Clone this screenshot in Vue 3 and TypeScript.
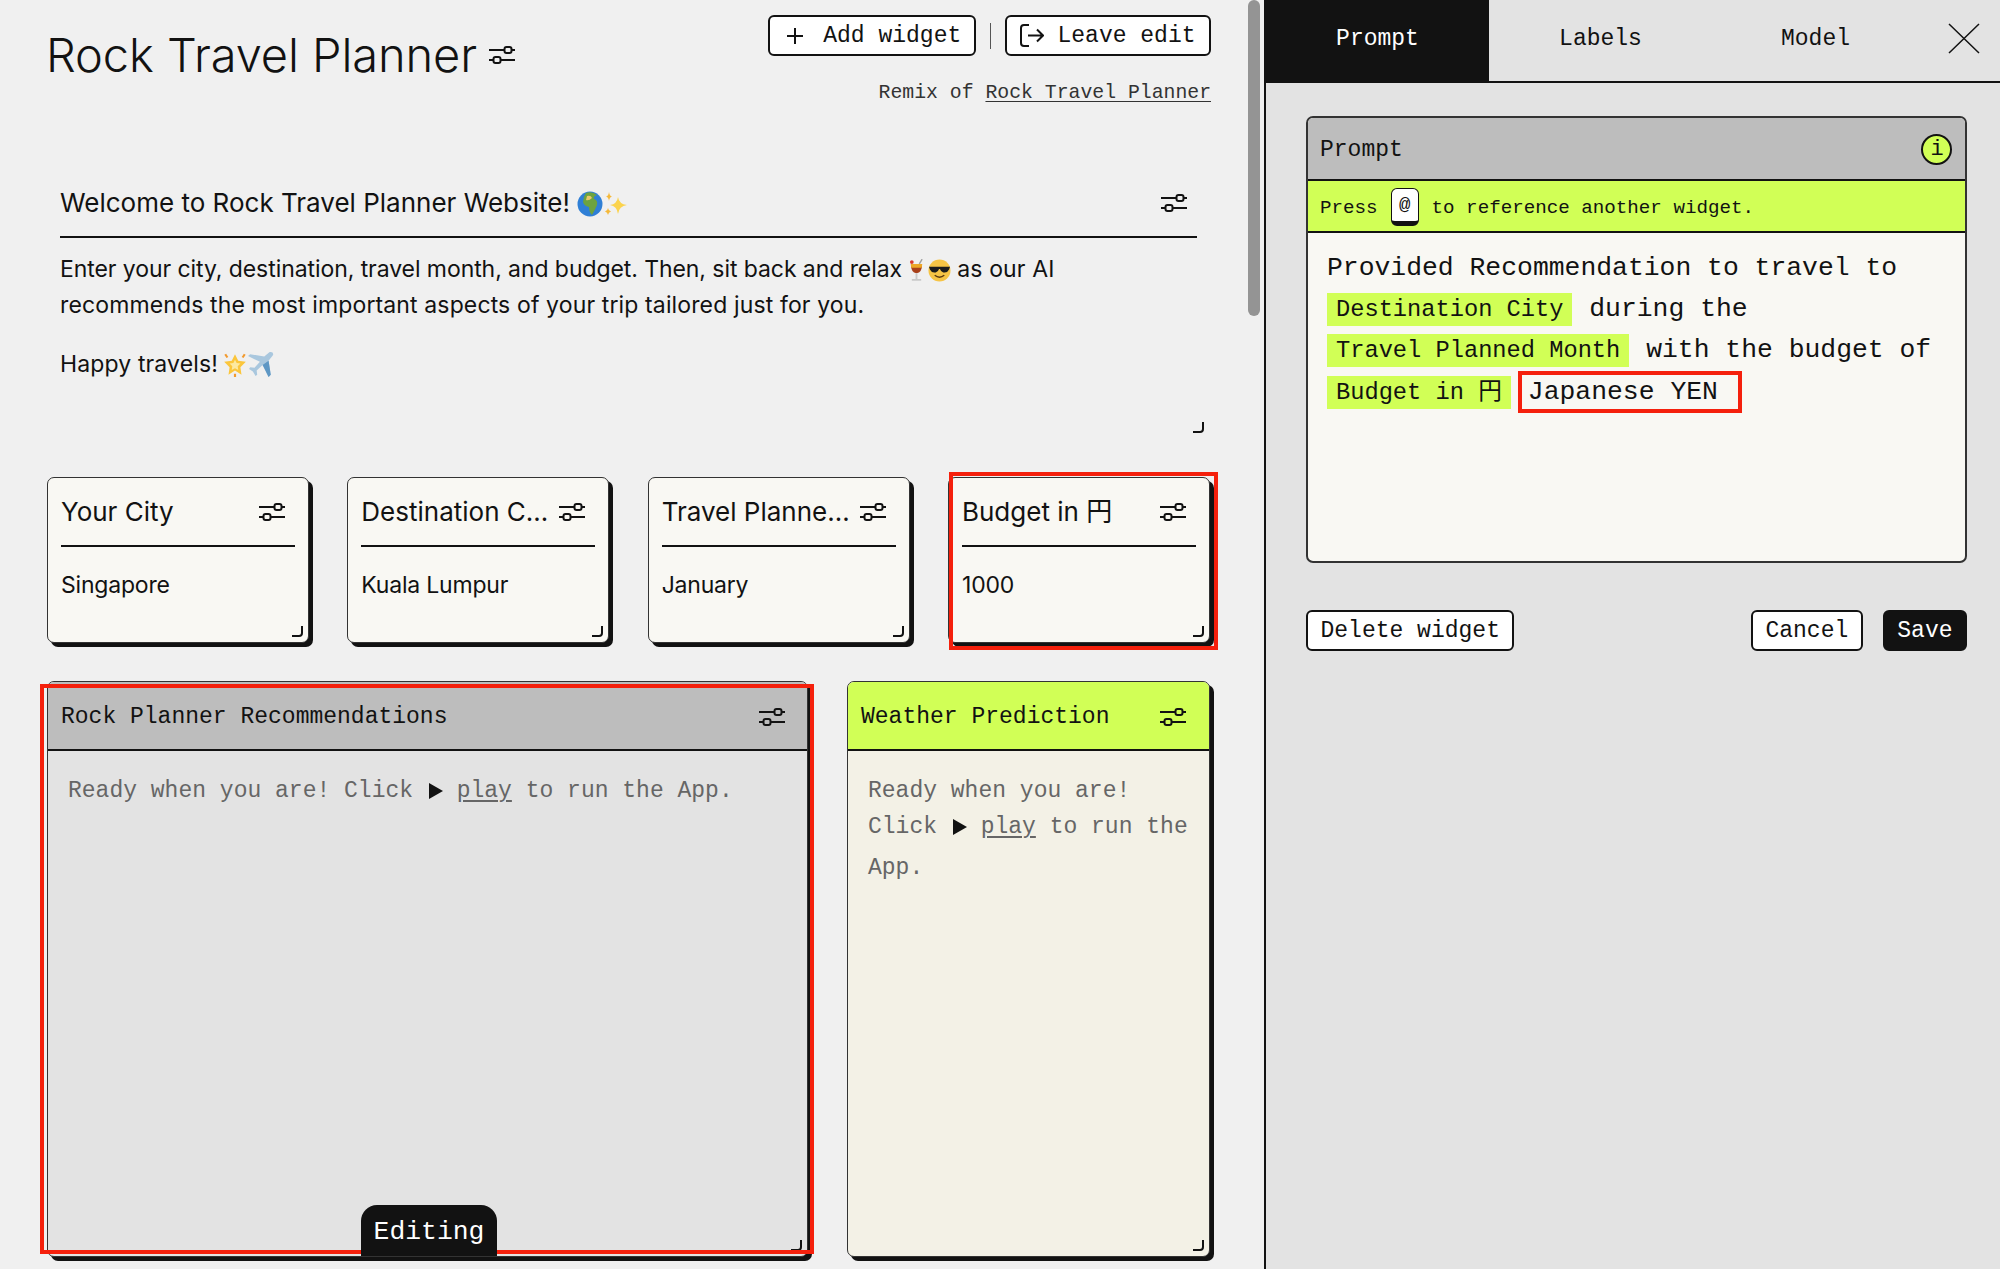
<script setup lang="ts">
import { ref } from 'vue'

interface Field {
  title: string
  value: string
  marked?: boolean
}

const fields = ref<Field[]>([
  { title: 'Your City', value: 'Singapore' },
  { title: 'Destination City', value: 'Kuala Lumpur' },
  { title: 'Travel Planned Month', value: 'January' },
  { title: 'Budget in 円', value: '1000', marked: true }
])

const tabs = ['Prompt', 'Labels', 'Model']
const activeTab = ref('Prompt')
</script>

<template>
  <svg class="defs" width="0" height="0" aria-hidden="true">
    <symbol id="sliders" viewBox="0 0 26 18">
      <path d="M0 4H15M23 4H26M0 14H4M12 14H26" fill="none" stroke="currentColor" stroke-width="2" />
      <rect x="15.500" y="1" width="7" height="6" rx="2" fill="none" stroke="currentColor" stroke-width="2" />
      <rect x="4.500" y="11" width="7" height="6" rx="2" fill="none" stroke="currentColor" stroke-width="2" />
    </symbol>
    <symbol id="corner" viewBox="0 0 12 12">
      <path d="M1 11H8Q11 11 11 8V1" fill="none" stroke="currentColor" stroke-width="2" />
    </symbol>
    <symbol id="play" viewBox="0 0 14 16">
      <path d="M0 0L14 8L0 16Z" fill="currentColor" />
    </symbol>
  </svg>

  <div class="app">
    <main class="board">
      <div class="scroll-thumb"></div>

      <header class="top">
        <div class="app-title">
          <h1>Rock Travel Planner</h1>
          <svg class="sliders"><use href="#sliders" /></svg>
        </div>
        <div class="top-right">
          <div class="actions">
            <button class="btn add">
              <svg width="18" height="18" viewBox="0 0 18 18"><path d="M9 1V17M1 9H17" fill="none" stroke="currentColor" stroke-width="2" /></svg>
              Add widget
            </button>
            <span class="divider"></span>
            <button class="btn leave">
              <svg width="24" height="23" viewBox="0 0 24 23" fill="none" stroke="currentColor" stroke-width="2">
                <path d="M9 1H4Q1 1 1 4V19Q1 22 4 22H9" />
                <path d="M8 11.500H23M17 5.500L23 11.500L17 17.500" />
              </svg>
              Leave edit
            </button>
          </div>
          <p class="remix">Remix of <a>Rock Travel Planner</a></p>
        </div>
      </header>

      <section class="welcome">
        <div class="welcome-head">
          <h2>
            Welcome to Rock Travel Planner Website!
            <svg class="emoji globe" viewBox="0 0 26 26" role="img" aria-label="globe">
              <circle cx="13" cy="13" r="12.500" fill="#2f7fd6" />
              <path d="M9 2Q15 0 20 4Q16 5 17 8Q21 9 20 14Q18 19 15 24Q12 21 12 16Q7 15 6 11Q6 6 9 2Z" fill="#6da33f" />
              <path d="M10 5Q14 4 15 7Q12 10 9 9Z" fill="#e8c76b" />
            </svg>
            <svg class="emoji sparkles" viewBox="0 0 26 26" role="img" aria-label="sparkles">
              <path d="M15 6Q16 13 24 14Q16 15 15 23Q14 15 7 14Q14 13 15 6Z" fill="#fbd34d" />
              <path d="M6 1Q6.500 5 9 5.500Q6.500 6 6 10Q5.500 6 3 5.500Q5.500 5 6 1Z" fill="#f5b93a" />
              <path d="M5 17Q5.500 20 8 20.500Q5.500 21 5 24Q4.500 21 2 20.500Q4.500 20 5 17Z" fill="#f5b93a" />
            </svg>
          </h2>
          <svg class="sliders"><use href="#sliders" /></svg>
        </div>
        <p class="intro">
          <span class="tight">Enter your city, destination, travel month, and budget. Then, sit back and relax</span>
          {{ ' ' }}
          <svg class="emoji cocktail" viewBox="0 0 16 24" role="img" aria-label="tropical drink">
            <path d="M2 5H14Q14 14 8 15Q2 14 2 5Z" fill="#a8401a" />
            <path d="M2 5H14Q14 8 13.500 9H2.500Q2 8 2 5Z" fill="#eda726" />
            <path d="M7 15H9V21H7ZM3 21H13V23H3Z" fill="#c9c9c9" />
            <path d="M11 5L14 0" stroke="#9c9c9c" stroke-width="1.500" />
            <circle cx="3" cy="3" r="2" fill="#d83a2b" />
          </svg>
          <svg class="emoji shades" viewBox="0 0 24 24" role="img" aria-label="smiling face with sunglasses">
            <circle cx="12" cy="12" r="11.500" fill="#f6c445" />
            <path d="M1 8H23L22 11Q20 15 16 14Q13 13 12.500 10.500H11.500Q11 13 8 14Q4 15 2 11Z" fill="#1c1c1c" />
            <path d="M7 17Q12 21 17 17" fill="none" stroke="#5b3a10" stroke-width="1.500" />
          </svg>
          as our AI<br />recommends the most important aspects of your trip tailored just for you.
        </p>
        <p class="intro last">
          Happy travels!
          <svg class="emoji star" viewBox="0 0 24 24" role="img" aria-label="glowing star">
            <path d="M12 3L15 9L22 10L17 15L18 22L12 18L6 22L7 15L2 10L9 9Z" fill="#fbc63c" />
            <path d="M12 8L13.500 11L17 11.500L14.500 14L15 17.500L12 16L9 17.500L9.500 14L7 11.500L10.500 11Z" fill="#fde9a0" />
            <path d="M3 3L5 6M21 3L19 6M12 24V21" stroke="#f29a2e" stroke-width="2" />
          </svg>
          <svg class="emoji plane" viewBox="0 0 24 24" role="img" aria-label="airplane">
            <path d="M21 1Q24 1 23 4L19 9L21 22L19 24L13.500 13L8 18L8.500 22L7 23L4.500 19L1 16.500L2 15L6 15.500L11 10L0 4.500L2 3L15 5L20 1Z" fill="#a9c7de" />
            <path d="M19 9L21 22L19 24L13.500 13Z" fill="#5e97c4" />
          </svg>
        </p>
        <svg class="corner welcome-corner"><use href="#corner" /></svg>
      </section>

      <section class="fields">
        <article v-for="field in fields" :key="field.title" class="field" :class="{ marked: field.marked }">
          <div class="field-head">
            <h3>{{ field.title }}</h3>
            <svg class="sliders"><use href="#sliders" /></svg>
          </div>
          <p class="field-value">{{ field.value }}</p>
          <svg class="corner"><use href="#corner" /></svg>
        </article>
      </section>

      <section class="outputs">
        <article class="output editing">
          <div class="output-head">
            <h3>Rock Planner Recommendations</h3>
            <svg class="sliders"><use href="#sliders" /></svg>
          </div>
          <p class="output-text">
            Ready when you are! Click
            <svg class="play"><use href="#play" /></svg> <u>play</u> to run the App.
          </p>
          <span class="editing-tag">Editing</span>
          <svg class="corner"><use href="#corner" /></svg>
        </article>
        <article class="output weather">
          <div class="output-head">
            <h3>Weather Prediction</h3>
            <svg class="sliders"><use href="#sliders" /></svg>
          </div>
          <p class="output-text">
            Ready when you are! Click
            <svg class="play"><use href="#play" /></svg> <u>play</u> to run the App.
          </p>
          <svg class="corner"><use href="#corner" /></svg>
        </article>
      </section>
    </main>

    <aside class="editor">
      <nav class="tabs">
        <button
          v-for="tab in tabs"
          :key="tab"
          class="tab"
          :class="{ active: tab === activeTab }"
          @click="activeTab = tab"
        >
          {{ tab }}
        </button>
        <button class="close" aria-label="Close">
          <svg width="32" height="31" viewBox="0 0 32 31"><path d="M1 1L31 30M31 1L1 30" fill="none" stroke="currentColor" stroke-width="1.500" /></svg>
        </button>
      </nav>

      <div class="editor-body">
        <section class="prompt">
          <div class="prompt-head">
            <span>Prompt</span>
            <span class="info">i</span>
          </div>
          <div class="prompt-hint"><span>Press</span><kbd>@</kbd><span>to reference another widget.</span></div>
          <div class="prompt-text">
            Provided Recommendation to travel to
            <span class="chip">Destination City</span> during the
            <span class="chip">Travel Planned Month</span> with the budget of
            <span class="chip">Budget in 円</span>
            <span class="typed">Japanese YEN</span>
          </div>
        </section>

        <div class="editor-actions">
          <button class="btn">Delete widget</button>
          <span class="spacer"></span>
          <button class="btn">Cancel</button>
          <button class="btn save">Save</button>
        </div>
      </div>
    </aside>
  </div>
</template>

<style>
html,
body {
  margin: 0;
  background: #f0f0f0;
}
</style>

<style scoped>
.defs {
  position: absolute;
}

.app {
  display: flex;
  width: 2000px;
  height: 1269px;
  overflow: hidden;
  color: #121212;
  font-family: 'Inter', 'Noto Sans CJK JP', sans-serif;
}

h1,
h2,
h3,
p {
  margin: 0;
  font-weight: 400;
}

button {
  font: inherit;
  color: inherit;
  cursor: pointer;
}

.sliders {
  flex: none;
  width: 26px;
  height: 18px;
}

.corner {
  position: absolute;
  right: 5px;
  bottom: 5px;
  width: 12px;
  height: 12px;
}

.emoji {
  display: inline-block;
  vertical-align: -5px;
  width: 26px;
  height: 26px;
}

.cocktail {
  width: 15px;
  height: 23px;
  margin-right: 4px;
}

.shades {
  width: 23px;
  height: 23px;
}

.star {
  margin-left: -3px;
}

/* left side */
.board {
  position: relative;
  flex: none;
  box-sizing: border-box;
  width: 1264px;
  padding: 15px 54px 0 47px;
  background: #f0f0f0;
}

.scroll-thumb {
  position: absolute;
  top: 0;
  right: 4px;
  width: 12px;
  height: 316px;
  border-radius: 6px;
  background: #949494;
}

.top {
  display: flex;
  justify-content: space-between;
  height: 155px;
  margin-right: -1px;
}

.app-title {
  display: flex;
  align-items: center;
  gap: 12px;
  height: 80px;
}

h1 {
  font-size: 47px;
  font-weight: 300;
  letter-spacing: -0.1px;
  line-height: 56px;
  margin-top: -1px;
  margin-left: -1px;
}

.top-right {
  display: flex;
  flex-direction: column;
  align-items: flex-end;
}

.actions {
  display: flex;
  align-items: center;
  gap: 14px;
}

.btn {
  display: inline-flex;
  align-items: center;
  justify-content: center;
  box-sizing: border-box;
  height: 41px;
  padding: 0 12.5px;
  border: 2px solid #121212;
  border-radius: 6px;
  background: #fff;
  font-family: 'Liberation Mono', monospace;
  font-size: 23px;
}

.add {
  gap: 19px;
  width: 208px;
  padding-left: 16px;
}

.leave {
  gap: 13px;
  width: 206px;
}

.divider {
  width: 1px;
  height: 26px;
  background: #555;
}

.remix {
  margin-top: 24px;
  color: #333;
  font-family: 'Liberation Mono', monospace;
  font-size: 19.8px;
  line-height: 26px;
}

.remix a {
  text-decoration: underline;
  text-underline-offset: 3px;
}

.welcome {
  position: relative;
  box-sizing: border-box;
  height: 269px;
  padding: 0 13px;
}

.welcome-head {
  display: flex;
  align-items: center;
  justify-content: space-between;
  box-sizing: border-box;
  height: 68px;
  padding-right: 10px;
  border-bottom: 2px solid #121212;
}

h2 {
  margin-top: -2px;
  font-size: 26px;
}

.intro {
  margin-top: 13px;
  font-size: 23px;
  letter-spacing: 0.13px;
  line-height: 36px;
}

.intro .tight {
  letter-spacing: -0.07px;
}

.intro.last {
  margin-top: 23px;
}

.welcome-corner {
  right: 6px;
  bottom: 6px;
}

.fields {
  display: grid;
  grid-template-columns: repeat(4, 262px);
  justify-content: space-between;
  margin-top: 38px;
}

.field {
  position: relative;
  box-sizing: border-box;
  height: 166px;
  padding: 0 13px;
  border: 1.5px solid #333;
  border-radius: 7px;
  background: #f9f8f3;
  box-shadow: 4px 4px 0 #121212;
}

.field-head {
  display: flex;
  align-items: center;
  justify-content: space-between;
  gap: 8px;
  box-sizing: border-box;
  height: 69px;
  padding-right: 10px;
  border-bottom: 2px solid #121212;
}

.field-head h3 {
  overflow: hidden;
  font-size: 26px;
  line-height: 34px;
  text-overflow: ellipsis;
  white-space: nowrap;
}

.field-value {
  margin-top: 22px;
  font-size: 23px;
  letter-spacing: -0.2px;
  line-height: 32px;
}

.marked::after,
.editing::after {
  content: '';
  position: absolute;
  border: 4px solid #f5200c;
  pointer-events: none;
}

.marked::after {
  top: -6px;
  right: -9px;
  bottom: -8px;
  left: 0;
}

.outputs {
  display: grid;
  grid-template-columns: 761px 363px;
  justify-content: space-between;
  margin-top: 38px;
}

.output {
  position: relative;
  box-sizing: border-box;
  height: 576px;
  border: 1.5px solid #333;
  border-radius: 7px;
  box-shadow: 4px 4px 0 #121212;
}

.editing {
  background: #e3e3e3;
}

.editing::after {
  top: 2px;
  right: -7px;
  bottom: 2px;
  left: -8px;
}

.weather {
  background: #f3f1e6;
}

.output-head {
  display: flex;
  align-items: center;
  justify-content: space-between;
  box-sizing: border-box;
  height: 69px;
  padding: 2px 23px 0 13px;
  border-bottom: 2px solid #121212;
  background: #bdbdbd;
  border-radius: 6px 6px 0 0;
}

.weather .output-head {
  background: #d1ff56;
}

.editing .output-head {
  padding-right: 22px;
}

.output-head h3 {
  font-family: 'Liberation Mono', monospace;
  font-size: 23px;
}

.output-text {
  padding: 22px 15px 0 20px;
  color: #666;
  font-family: 'Liberation Mono', monospace;
  font-size: 23px;
  line-height: 36px;
}

.output-text u {
  display: inline-block;
  padding-bottom: 5px;
  text-underline-offset: 3px;
}

.play {
  width: 14px;
  height: 16px;
  margin-left: 2px;
  vertical-align: -2px;
  color: #121212;
}

.editing-tag {
  position: absolute;
  bottom: 0;
  left: 313px;
  z-index: 1;
  box-sizing: border-box;
  width: 136px;
  height: 51px;
  padding-top: 12px;
  border-radius: 16px 16px 0 0;
  background: #121212;
  color: #fff;
  font-family: 'Liberation Mono', monospace;
  font-size: 26.4px;
  text-align: center;
}

/* right side */
.editor {
  flex: 1;
  border-left: 2px solid #121212;
  background: #e3e3e3;
}

.tabs {
  display: flex;
  box-sizing: border-box;
  height: 83px;
  border-bottom: 2px solid #121212;
}

.tab {
  width: 223px;
  padding: 0 0 3px;
  border: 0;
  background: none;
  font-family: 'Liberation Mono', monospace;
  font-size: 23px;
}

.tab:nth-child(3) {
  width: 207px;
}

.tab.active {
  background: #121212;
  color: #fff;
}

.close {
  flex: 1;
  padding: 0 0 0 8px;
  border: 0;
  background: none;
}

.editor-body {
  padding: 33px 33px 0 40px;
}

.prompt {
  box-sizing: border-box;
  height: 447px;
  overflow: hidden;
  border: 2px solid #333;
  border-radius: 7px;
  background: #f9f8f3;
  font-family: 'Liberation Mono', 'Noto Sans CJK JP', monospace;
}

.prompt-head {
  display: flex;
  align-items: center;
  justify-content: space-between;
  box-sizing: border-box;
  height: 63px;
  padding: 2px 13px 0 12px;
  border-bottom: 2px solid #121212;
  background: #bdbdbd;
  font-size: 23px;
}

.info {
  display: flex;
  align-items: center;
  justify-content: center;
  box-sizing: border-box;
  width: 31px;
  height: 31px;
  padding-left: 1px;
  border: 2px solid #121212;
  border-radius: 50%;
  background: #d1ff56;
  font-size: 22px;
}

.prompt-hint {
  display: flex;
  align-items: center;
  gap: 13px;
  box-sizing: border-box;
  height: 52px;
  padding: 1px 0 0 12px;
  border-bottom: 2px solid #121212;
  background: #d1ff56;
  font-size: 19.2px;
}

.prompt-hint span {
  padding-top: 2px;
}

kbd {
  display: flex;
  align-items: center;
  justify-content: center;
  box-sizing: border-box;
  width: 28px;
  height: 38px;
  border: 1.5px solid #121212;
  border-bottom-width: 5px;
  border-radius: 6px;
  background: #fff;
  font-family: inherit;
  font-size: 19px;
}

.prompt-text {
  padding: 15px 14px 0 19px;
  font-size: 26.4px;
  line-height: 41px;
}

.chip {
  display: inline-block;
  padding: 0 9px;
  margin-right: 1px;
  background: #d1ff56;
  font-size: 23.7px;
  line-height: 33px;
  white-space: nowrap;
}

.typed {
  display: inline-block;
  padding: 0 20px 0 6px;
  margin-left: 6px;
  border: 4px solid #f5200c;
  line-height: 34px;
}

.editor-actions {
  display: flex;
  gap: 20px;
  margin-top: 47px;
}

.spacer {
  flex: 1;
}

.save {
  background: #121212;
  color: #fff;
}
</style>
